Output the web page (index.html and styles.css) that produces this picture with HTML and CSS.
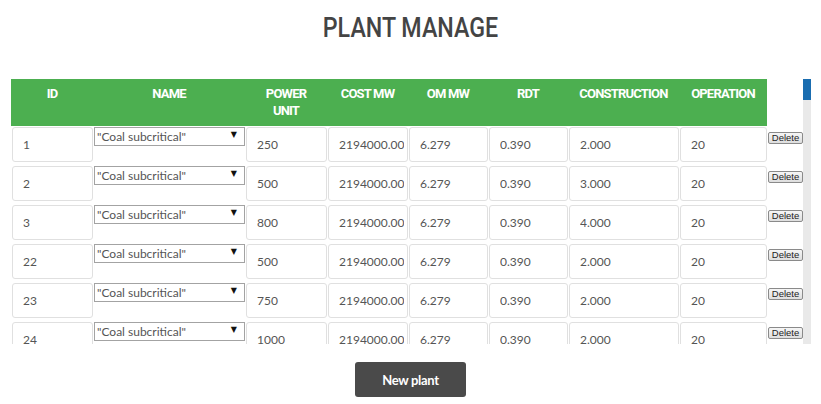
FILE: index.html
```html
<!DOCTYPE html>
<html lang="en">
<head>
<meta charset="utf-8">
<title>Plant manage</title>
<link rel="stylesheet" href="styles.css">
</head>
<body>
<h1 class="title">PLANT MANAGE</h1>
<div class="table-box">
  <div class="table-view">
    <table class="plants">
      <colgroup>
        <col class="c-id"><col class="c-name"><col class="c-power"><col class="c-cost"><col class="c-om"><col class="c-rdt"><col class="c-cons"><col class="c-op"><col class="c-act">
      </colgroup>
      <thead>
        <tr>
          <th>ID</th><th>NAME</th><th>POWER<br>UNIT</th><th>COST MW</th><th>OM MW</th><th>RDT</th><th>CONSTRUCTION</th><th>OPERATION</th><th class="blank"></th>
        </tr>
      </thead>
      <tbody>
        <tr>
          <td><input class="field" value="1"></td>
          <td><div class="pick"><select><option>"Coal subcritical"</option></select></div></td>
          <td><input class="field" value="250"></td>
          <td><input class="field" value="2194000.000"></td>
          <td><input class="field" value="6.279"></td>
          <td><input class="field" value="0.390"></td>
          <td><input class="field" value="2.000"></td>
          <td><input class="field" value="20"></td>
          <td class="act"><button class="del">Delete</button></td>
        </tr>
        <tr>
          <td><input class="field" value="2"></td>
          <td><div class="pick"><select><option>"Coal subcritical"</option></select></div></td>
          <td><input class="field" value="500"></td>
          <td><input class="field" value="2194000.000"></td>
          <td><input class="field" value="6.279"></td>
          <td><input class="field" value="0.390"></td>
          <td><input class="field" value="3.000"></td>
          <td><input class="field" value="20"></td>
          <td class="act"><button class="del">Delete</button></td>
        </tr>
        <tr>
          <td><input class="field" value="3"></td>
          <td><div class="pick"><select><option>"Coal subcritical"</option></select></div></td>
          <td><input class="field" value="800"></td>
          <td><input class="field" value="2194000.000"></td>
          <td><input class="field" value="6.279"></td>
          <td><input class="field" value="0.390"></td>
          <td><input class="field" value="4.000"></td>
          <td><input class="field" value="20"></td>
          <td class="act"><button class="del">Delete</button></td>
        </tr>
        <tr>
          <td><input class="field" value="22"></td>
          <td><div class="pick"><select><option>"Coal subcritical"</option></select></div></td>
          <td><input class="field" value="500"></td>
          <td><input class="field" value="2194000.000"></td>
          <td><input class="field" value="6.279"></td>
          <td><input class="field" value="0.390"></td>
          <td><input class="field" value="2.000"></td>
          <td><input class="field" value="20"></td>
          <td class="act"><button class="del">Delete</button></td>
        </tr>
        <tr>
          <td><input class="field" value="23"></td>
          <td><div class="pick"><select><option>"Coal subcritical"</option></select></div></td>
          <td><input class="field" value="750"></td>
          <td><input class="field" value="2194000.000"></td>
          <td><input class="field" value="6.279"></td>
          <td><input class="field" value="0.390"></td>
          <td><input class="field" value="2.000"></td>
          <td><input class="field" value="20"></td>
          <td class="act"><button class="del">Delete</button></td>
        </tr>
        <tr>
          <td><input class="field" value="24"></td>
          <td><div class="pick"><select><option>"Coal subcritical"</option></select></div></td>
          <td><input class="field" value="1000"></td>
          <td><input class="field" value="2194000.000"></td>
          <td><input class="field" value="6.279"></td>
          <td><input class="field" value="0.390"></td>
          <td><input class="field" value="2.000"></td>
          <td><input class="field" value="20"></td>
          <td class="act"><button class="del">Delete</button></td>
        </tr>
      </tbody>
    </table>
  </div>
  <div class="scrollbar"><div class="thumb"></div></div>
</div>
<div class="actions">
  <button class="new-plant">New plant</button>
</div>
</body>
</html>
```
FILE: styles.css
```css
* { box-sizing: border-box; }

html, body { background: #fff; }

body {
  margin: 0;
  font-family: Lato, "Open Sans", sans-serif;
  color: #555;
}

.title {
  margin: 11px 0 0;
  height: 34px;
  line-height: 34px;
  font-family: Roboto, sans-serif;
  font-size: 28px;
  font-weight: 500;
  color: #444;
  text-align: center;
  transform: scaleX(0.83);
}

.table-box {
  display: flex;
  margin: 34px 0 0 11px;
  width: 800px;
  height: 265px;
}

.table-view {
  width: 792px;
  height: 100%;
  overflow: hidden;
}

.scrollbar {
  width: 8px;
  height: 100%;
  background: #e9e9e9;
}

.thumb {
  height: 21px;
  background: #1a6db0;
}

.plants {
  table-layout: fixed;
  width: 792px;
  border-collapse: collapse;
  border-spacing: 0;
}

.c-id { width: 82px; }
.c-name { width: 152px; }
.c-power { width: 82px; }
.c-cost { width: 81px; }
.c-om { width: 80px; }
.c-rdt { width: 80px; }
.c-cons { width: 111px; }
.c-op { width: 88px; }
.c-act { width: 36px; }

.plants th {
  height: 47px;
  padding: 6px 0 7px;
  background: #4caf50;
  color: #fff;
  font-family: Roboto, sans-serif;
  font-size: 13px;
  font-weight: 700;
  letter-spacing: -0.8px;
  line-height: 17px;
  text-align: center;
  vertical-align: top;
}

.plants th.blank { background: #fff; }

.plants td {
  padding: 1px 0 3px 1px;
  vertical-align: top;
}

.field {
  display: block;
  width: 100%;
  height: 35px;
  margin: 0;
  padding: 0 3px 0 10px;
  border: 1px solid #e0e0e0;
  border-radius: 3px;
  background: #fff;
  font-family: Lato, sans-serif;
  font-size: 12px;
  color: #555;
  outline: none;
}

.pick {
  position: relative;
  width: 151px;
}

.pick select {
  display: block;
  width: 100%;
  height: 19px;
  margin: 0;
  padding: 0 0 1px 2px;
  border: 1px solid #a3a3a3;
  border-radius: 0;
  background: #fff;
  font-family: Lato, sans-serif;
  font-size: 12px;
  color: #555;
  -webkit-appearance: none;
  appearance: none;
}

.pick::after {
  content: "\25BC";
  position: absolute;
  top: 4px;
  right: 8px;
  font-family: "DejaVu Sans", sans-serif;
  font-size: 8px;
  line-height: 8px;
  color: #111;
  pointer-events: none;
}

.plants td.act {
  padding: 6px 0 0 1px;
}

.del {
  display: block;
  width: 35px;
  height: 12px;
  margin: 0;
  padding: 0;
  border: 1px solid #8a8a8a;
  border-radius: 2px;
  background: linear-gradient(#f6f6f6, #dedede);
  font-family: "Liberation Sans", Arial, sans-serif;
  font-size: 9.5px;
  line-height: 10px;
  color: #222;
}

.actions {
  display: flex;
  justify-content: center;
  margin-top: 18px;
}

.new-plant {
  width: 111px;
  height: 35px;
  border: 0;
  border-radius: 3px;
  background: #4a4a4a;
  color: #fff;
  font-family: Lato, sans-serif;
  font-size: 13px;
  font-weight: 700;
  letter-spacing: -0.3px;
}
```
